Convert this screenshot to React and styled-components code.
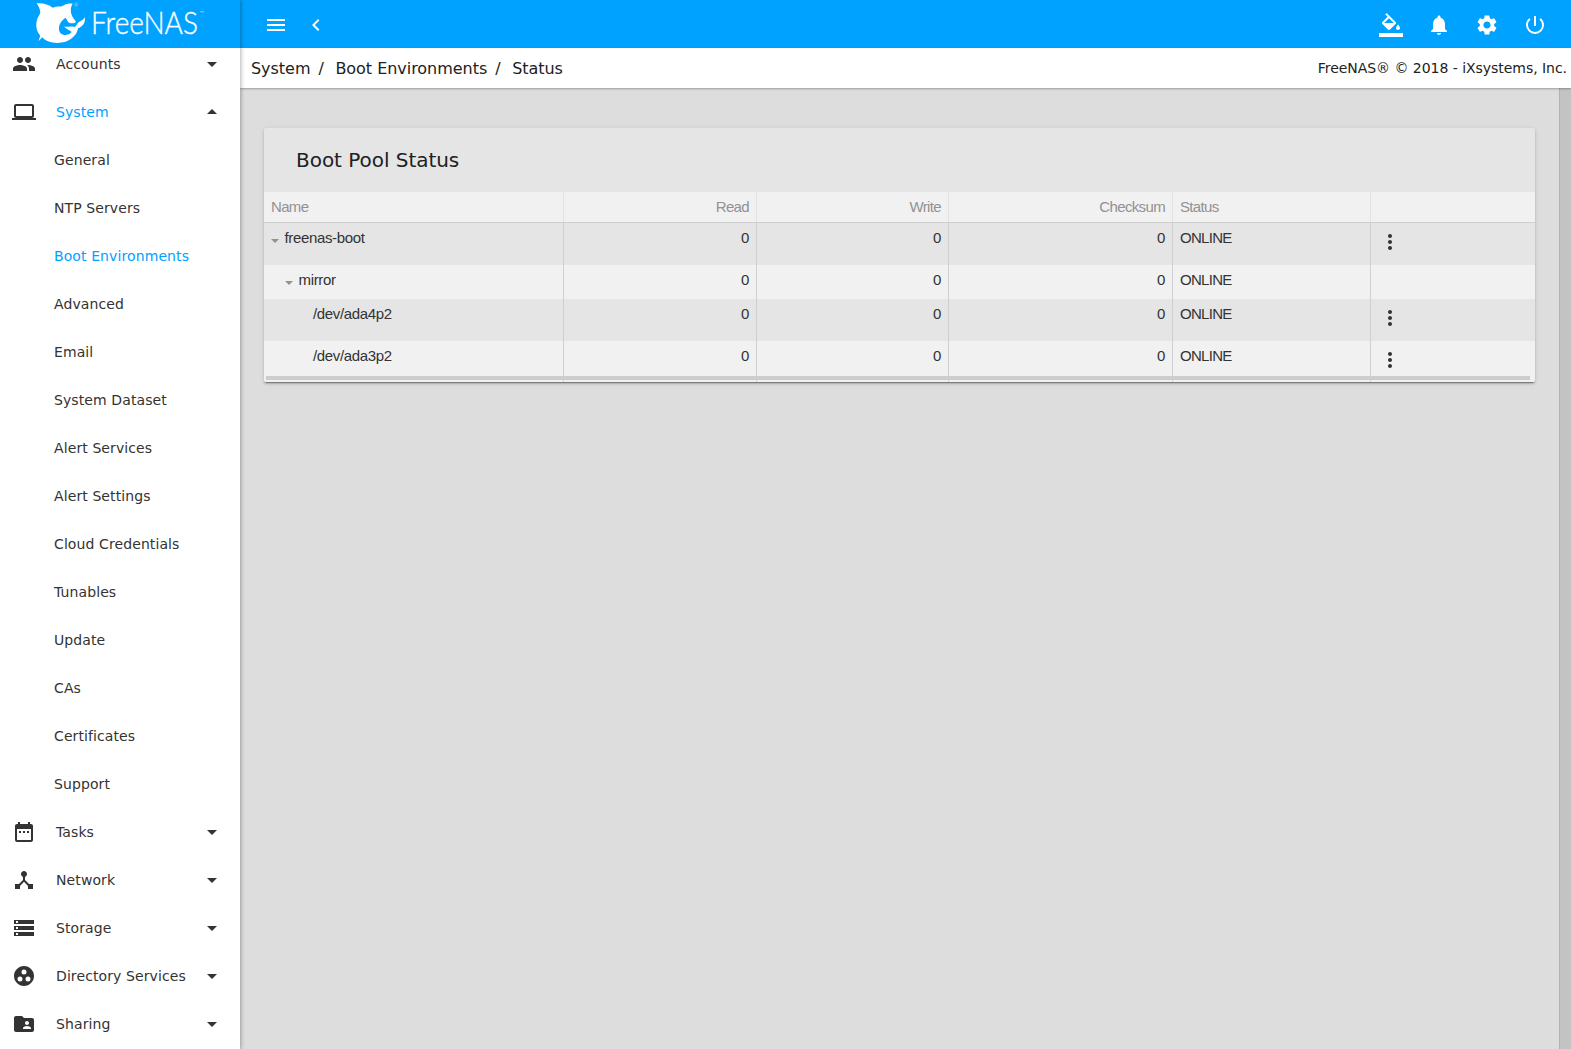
import React from 'react';
import styled, { createGlobalStyle } from 'styled-components';
import {
  MdPeople, MdLaptop, MdDateRange, MdDeviceHub, MdStorage, MdGroupWork,
  MdFolderShared, MdArrowDropDown, MdArrowDropUp, MdMenu, MdChevronLeft,
  MdNotifications, MdSettings, MdPowerSettingsNew, MdMoreVert,
} from 'react-icons/md';

const Global = createGlobalStyle`
  * { box-sizing: border-box; }
  html, body { margin: 0; padding: 0; overflow: hidden; }
  body { font-family: "DejaVu Sans", sans-serif; color: #212121; }
`;

const Shell = styled.div`
  display: flex;
  height: 100vh;
  overflow: hidden;
  background: #dddddd;
`;

const Sidebar = styled.aside`
  display: flex;
  flex-direction: column;
  flex: 0 0 240px;
  background: #fff;
  position: relative;
  z-index: 2;
  box-shadow: 1px 0 4px rgba(0, 0, 0, 0.3);
`;

const Brand = styled.div`
  flex: 0 0 48px;
  height: 48px;
  background: #00a2ff;
  svg { display: block; }
`;

const NavViewport = styled.nav`
  flex: 1;
  min-height: 0;
  overflow: hidden;
`;

const NavList = styled.ul`
  list-style: none;
  margin: -8px 0 0;
  padding: 0;
  font-size: 14px;
  letter-spacing: 0.1px;
`;

const NavItem = styled.li`
  display: flex;
  align-items: center;
  height: 48px;
  padding: 0 16px 0 12px;
  color: ${(p) => (p.$active ? '#00a2ff' : '#333')};
  svg { flex: none; color: #333; }
`;

const NavLabel = styled.span`
  flex: 1;
  margin-left: 20px;
`;

const SubItem = styled.li`
  display: flex;
  align-items: center;
  height: 48px;
  padding-left: 54px;
  color: ${(p) => (p.$active ? '#00a2ff' : '#333')};
`;

const Main = styled.div`
  flex: 1;
  min-width: 0;
  display: flex;
  flex-direction: column;
`;

const TopBar = styled.header`
  flex: 0 0 48px;
  display: flex;
  align-items: center;
  justify-content: space-between;
  padding: 2px 24px 0;
  background: #00a2ff;
  color: #fff;
`;

const IconGroup = styled.div`
  display: flex;
  align-items: center;
  gap: ${(p) => p.$gap}px;
`;

const FillIcon = styled.svg`
  width: 24px;
  height: 24px;
  fill: currentColor;
`;

const CrumbBar = styled.div`
  flex: 0 0 40px;
  display: flex;
  align-items: center;
  justify-content: space-between;
  padding: 0 4px 0 11px;
  background: #fff;
  box-shadow: 0 1px 2px rgba(0, 0, 0, 0.3);
  z-index: 1;
`;

const Crumbs = styled.div`
  display: flex;
  font-size: 16px;
  letter-spacing: -0.04px;
`;

const Slash = styled.span`
  margin: 0 12px 0 8px;
  width: 5px;
`;

const Copyright = styled.span`
  font-size: 14px;
  letter-spacing: -0.04px;
`;

const Body = styled.div`
  flex: 1;
  min-height: 0;
  display: flex;
`;

const Content = styled.main`
  flex: 1;
  padding: 40px 24px;
`;

const ScrollTrack = styled.div`
  flex: 0 0 12px;
  background: #c2c3c2;
  border-left: 1px solid #b2b2b2;
`;

const Card = styled.section`
  height: 254px;
  overflow: hidden;
  border-radius: 2px;
  background: #e5e5e5;
  display: flex;
  flex-direction: column;
  box-shadow: 0 3px 1px -2px rgba(0, 0, 0, 0.2), 0 2px 2px 0 rgba(0, 0, 0, 0.14), 0 1px 5px 0 rgba(0, 0, 0, 0.12), 0 1px 0 rgba(0, 0, 0, 0.12);
`;

const CardTitle = styled.h3`
  margin: 0;
  height: 64px;
  flex: none;
  padding-left: 32px;
  line-height: 64px;
  font-size: 20px;
  font-weight: 400;
  letter-spacing: -0.04px;
`;

const Row = styled.div`
  display: grid;
  grid-template-columns: 300px 193px 192px 224px 198px 1fr;
  flex: none;
  height: ${(p) => p.$height}px;
  background: ${(p) => (p.$shade ? '#e5e5e5' : '#f1f1f1')};
  color: #333;
  font: 15px "Liberation Sans", Arial, sans-serif;
  letter-spacing: -0.35px;
  line-height: 17px;
`;

const HeadRow = styled(Row)`
  color: #929292;
  border-bottom: 1px solid #cecece;
  letter-spacing: -0.65px;
`;

const Cell = styled.div`
  display: flex;
  justify-content: ${(p) => (p.$right ? 'flex-end' : 'flex-start')};
  align-items: flex-start;
  padding: 6px 7px 0 ${(p) => 7 + (p.$indent || 0)}px;
  border-right: 1px solid ${(p) => (p.$head ? '#e2e2e2' : '#d0d0d0')};
  &:last-child { border-right: 0; }
`;

const Status = styled.span`
  letter-spacing: -0.7px;
`;

const Toggler = styled.svg`
  flex: none;
  width: 8px;
  height: 4px;
  margin: 10px 5.500px 0 0;
`;

const RowMenu = styled.div`
  display: flex;
  color: #333;
  margin-top: 1px;
`;

const HorizontalBar = styled.div`
  flex: none;
  height: 4px;
  margin: -6px 5px 2px 2px;
  background: #cdcdcd;
  z-index: 1;
`;

const LogoText = styled.text`
  font-family: Lato, "Open Sans", sans-serif;
  font-weight: 300;
  fill: #fff;
`;

const Wordmark = styled(LogoText)`
  stroke: #fff;
  stroke-width: 0.35px;
`;

const Logo = () => (
  <svg width="240" height="48" viewBox="0 0 240 48">
    <g transform="scale(.33333)">
      <path
        fill="#fff"
        d="M110 10C128 8 146 13 158 23C170 19 180 20 186 19C195 12 205 9 218 11C212 21 211 31 214 42C216 52 224 58 228 66C222 71 214 71 207 68C202 65 200 57 197 53C186 60 177 72 177 84C176 97 184 105 197 105C206 104 212 100 215 96C210 91 200 89 192 79C201 83 211 77 222 81C230 80 229 70 238 65C246 62 252 57 255 51C257 70 246 80 234 85C231 107 208 129 172 129C151 129 135 122 127 112L115 124L121 107C110 94 106 78 111 60C113 51 121 43 121 37C120 26 115 18 110 10Z"
      />
    </g>
    <Wordmark x="91" y="34" fontSize="31" textLength="107" lengthAdjust="spacingAndGlyphs">FreeNAS</Wordmark>
    <LogoText x="200" y="15" fontSize="5.500">™</LogoText>
    <LogoText x="74" y="7" fontSize="5">®</LogoText>
  </svg>
);

const SYSTEM_PAGES = [
  'General', 'NTP Servers', 'Boot Environments', 'Advanced', 'Email', 'System Dataset',
  'Alert Services', 'Alert Settings', 'Cloud Credentials', 'Tunables', 'Update', 'CAs',
  'Certificates', 'Support',
];

const MENU = [
  { label: 'Accounts', Icon: MdPeople },
  { label: 'System', Icon: MdLaptop, pages: SYSTEM_PAGES },
  { label: 'Tasks', Icon: MdDateRange },
  { label: 'Network', Icon: MdDeviceHub },
  { label: 'Storage', Icon: MdStorage },
  { label: 'Directory Services', Icon: MdGroupWork },
  { label: 'Sharing', Icon: MdFolderShared },
];

const POOL = [
  { name: 'freenas-boot', indent: 0, open: true, menu: true, height: 42 },
  { name: 'mirror', indent: 14, open: true, menu: false, height: 34 },
  { name: '/dev/ada4p2', indent: 42, menu: true, height: 42 },
  { name: '/dev/ada3p2', indent: 42, menu: true, height: 41 },
];

export default function App() {
  return (
    <>
      <Global />
      <Shell>
        <Sidebar>
          <Brand><Logo /></Brand>
          <NavViewport>
            <NavList>
              {MENU.map(({ label, Icon, pages }) => (
                <React.Fragment key={label}>
                  <NavItem $active={!!pages}>
                    <Icon size={24} />
                    <NavLabel>{label}</NavLabel>
                    {pages ? <MdArrowDropUp size={24} /> : <MdArrowDropDown size={24} />}
                  </NavItem>
                  {pages && pages.map((page) => (
                    <SubItem key={page} $active={page === 'Boot Environments'}>{page}</SubItem>
                  ))}
                </React.Fragment>
              ))}
            </NavList>
          </NavViewport>
        </Sidebar>
        <Main>
          <TopBar>
            <IconGroup $gap={16}>
              <MdMenu size={24} />
              <MdChevronLeft size={24} />
            </IconGroup>
            <IconGroup $gap={24}>
              <FillIcon viewBox="0 0 24 24">
                <path d="M16.560 8.940L7.620 0 6.210 1.410l2.380 2.380-5.150 5.150c-.59.59-.59 1.540 0 2.120l5.500 5.500c.29.29.68.44 1.060.44s.77-.15 1.060-.44l5.500-5.500c.59-.58.59-1.530 0-2.120zM5.210 10L10 5.210 14.790 10H5.210zM19 11.500s-2 2.170-2 3.500c0 1.100.9 2 2 2s2-.9 2-2c0-1.330-2-3.500-2-3.500zM0 20h24v4H0z" />
              </FillIcon>
              <MdNotifications size={24} />
              <MdSettings size={24} />
              <MdPowerSettingsNew size={24} />
            </IconGroup>
          </TopBar>
          <CrumbBar>
            <Crumbs>
              <span>System</span><Slash>/</Slash>
              <span>Boot Environments</span><Slash>/</Slash>
              <span>Status</span>
            </Crumbs>
            <Copyright>FreeNAS® © 2018 - iXsystems, Inc.</Copyright>
          </CrumbBar>
          <Body>
            <Content>
              <Card>
                <CardTitle>Boot Pool Status</CardTitle>
                <HeadRow $height={31}>
                  <Cell $head>Name</Cell>
                  <Cell $head $right>Read</Cell>
                  <Cell $head $right>Write</Cell>
                  <Cell $head $right>Checksum</Cell>
                  <Cell $head>Status</Cell>
                  <Cell />
                </HeadRow>
                {POOL.map((r, i) => (
                  <Row key={r.name} $height={r.height} $shade={i % 2 === 0}>
                    <Cell $indent={r.indent}>
                      {r.open && (
                        <Toggler viewBox="0 0 8 4"><path d="M0 0h8L4 4z" fill="#929292" /></Toggler>
                      )}
                      {r.name}
                    </Cell>
                    <Cell $right>0</Cell>
                    <Cell $right>0</Cell>
                    <Cell $right>0</Cell>
                    <Cell><Status>ONLINE</Status></Cell>
                    <Cell>{r.menu && <RowMenu><MdMoreVert size={24} /></RowMenu>}</Cell>
                  </Row>
                ))}
                <HorizontalBar />
              </Card>
            </Content>
            <ScrollTrack />
          </Body>
        </Main>
      </Shell>
    </>
  );
}
